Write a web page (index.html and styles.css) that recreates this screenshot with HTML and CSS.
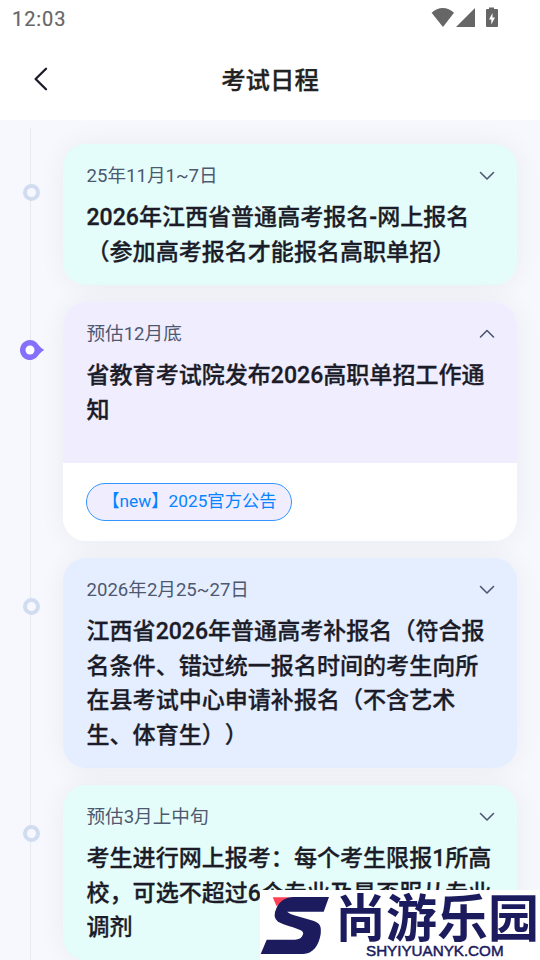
FILE: index.html
```html
<!DOCTYPE html>
<html lang="zh-CN">
<head>
<meta charset="utf-8">
<meta name="viewport" content="width=device-width, initial-scale=1">
<title>考试日程</title>
<link rel="stylesheet" href="styles.css">
</head>
<body>
<div class="screen">
  <div class="status">
    <span class="clock">12:03</span>
    <svg class="status-icons" width="68" height="20" viewBox="0 0 68 20">
      <path d="M0.6 4.8C7 -1.6 16.6 -1.6 23 4.8L12 19Z"/>
      <path d="M25 19L44 0V19Z"/>
      <path fill-rule="evenodd" d="M58 -0.5H63V1H66Q67 1 67 2V18Q67 19 66 19H56Q55 19 55 18V2Q55 1 56 1H58ZM61.5 5L58 11.5H60.3V16.5L64 9.5H61.5Z"/>
    </svg>
  </div>
  <header class="nav">
    <svg class="back" width="16" height="24" viewBox="0 0 16 24"><path d="M13 1.8L2.6 12L13 22.2"/></svg>
    <h1>考试日程</h1>
  </header>
  <main class="timeline">
    <section class="item">
      <div class="rail"><i class="dot"></i></div>
      <article class="card mint">
        <div class="head">
          <div class="meta"><span>25年11月1~7日</span><svg class="chev" width="16" height="10" viewBox="0 0 16 10"><path d="M1.5 1.5L8 8L14.5 1.5"/></svg></div>
          <h2>2026年江西省普通高考报名-网上报名<br>（参加高考报名才能报名高职单招）</h2>
        </div>
      </article>
    </section>
    <section class="item">
      <div class="rail"><svg class="pin" width="26" height="22" viewBox="0 0 26 22"><path d="M11 1A10 10 0 1 0 17.5 18.6C20 15.5 22 12.8 25.2 11C22 9.2 20 6.5 17.5 3.4A10 10 0 0 0 11 1Z"/><circle cx="11" cy="11" r="4.5"/></svg></div>
      <article class="card open">
        <div class="head lilac">
          <div class="meta"><span>预估12月底</span><svg class="chev" width="16" height="10" viewBox="0 0 16 10"><path d="M1.5 8L8 1.5L14.5 8"/></svg></div>
          <h2>省教育考试院发布2026高职单招工作通<br>知</h2>
        </div>
        <div class="links"><a class="pill">【new】2025官方公告</a></div>
      </article>
    </section>
    <section class="item">
      <div class="rail"><i class="dot"></i></div>
      <article class="card blue">
        <div class="head">
          <div class="meta"><span>2026年2月25~27日</span><svg class="chev" width="16" height="10" viewBox="0 0 16 10"><path d="M1.5 1.5L8 8L14.5 1.5"/></svg></div>
          <h2>江西省2026年普通高考补报名（符合报<br>名条件、错过统一报名时间的考生向所<br>在县考试中心申请补报名（不含艺术<br>生、体育生））</h2>
        </div>
      </article>
    </section>
    <section class="item">
      <div class="rail"><i class="dot"></i></div>
      <article class="card mint">
        <div class="head">
          <div class="meta"><span>预估3月上中旬</span><svg class="chev" width="16" height="10" viewBox="0 0 16 10"><path d="M1.5 1.5L8 8L14.5 1.5"/></svg></div>
          <h2>考生进行网上报考：每个考生限报1所高<br>校，可选不超过6个专业及是否服从专业<br>调剂</h2>
        </div>
      </article>
    </section>
  </main>
  <aside class="brand">
    <svg class="mark" width="70" height="64" viewBox="0 0 70 64">
      <path class="red" d="M12.7 3.3H30L16.5 12Z"/>
      <path class="navy" d="M69 3H33C25 3 19 8 16.5 14Q12 23 18 27.7C25 31.5 34 33 40 36Q44 37.5 43 40.5Q41 45.7 35 45.7H6.7L0.7 60H43C53 60 59 51 60.7 40C61.5 32 60 29.5 54 27L35 21.5Q29.5 20 27 17.7H63.7Z"/>
    </svg>
    <div class="brand-text">
      <div class="brand-name">尚游乐园</div>
      <div class="brand-url">SHYIYUANYK.COM</div>
    </div>
  </aside>
</div>
</body>
</html>
```
FILE: styles.css
```css
* { box-sizing: border-box; }
body {
  margin: 0;
  font-family: Roboto, "Noto Sans CJK SC", sans-serif;
  text-spacing-trim: space-all;
}
.screen {
  position: relative;
  width: 540px;
  height: 960px;
  overflow: hidden;
  background: #f7f8fd;
}
.status {
  display: flex;
  justify-content: space-between;
  height: 38px;
  padding: 8px 42px 0 12px;
  background: #fff;
}
.clock {
  font-size: 20px;
  line-height: 22px;
  font-weight: 400;
  letter-spacing: 0.9px;
  color: #666;
  -webkit-text-stroke: 0.2px #666;
}
.status-icons { fill: #666; margin-right: -1px; overflow: visible; }
.nav {
  display: grid;
  grid-template-columns: 60px 1fr 60px;
  align-items: center;
  height: 82px;
  background: #fff;
}
.back {
  margin-left: 33px;
  fill: none;
  stroke: #1a1b28;
  stroke-width: 2.3;
  stroke-linecap: round;
  stroke-linejoin: round;
}
h1 {
  margin: 0;
  padding-bottom: 1px;
  font-size: 24.4px;
  font-weight: 500;
  text-align: center;
  color: #222;
  -webkit-text-stroke: 0.3px #222;
}
.timeline {
  display: flex;
  flex-direction: column;
  gap: 17.1px;
  height: 840px;
  padding: 24px 23px 0 0;
  background: linear-gradient(#e7e9ef, #e7e9ef) 30px 8px / 1px 100% no-repeat;
}
.item { display: flex; flex: none; }
.rail { width: 63.4px; flex: none; padding: 39.5px 0 0 23px; }
.dot {
  display: block;
  width: 17px;
  height: 17px;
  border: 4px solid #d1dcf0;
  border-radius: 50%;
  background: #f7f8fd;
}
.pin { display: block; margin: -2.4px 0 0 -4.4px; fill: #866ffa; }
.pin circle { fill: #fff; }
.card {
  flex: 1;
  border-radius: 23px;
  overflow: hidden;
  box-shadow: 0 0 28px rgba(40, 45, 60, 0.055);
}
.mint { background: #e5fdfa; }
.blue { background: #e5eeff; }
.open { background: #fff; }
.lilac { background: #f0edff; }
.head { padding: 18.4px 22px 14.6px 23.1px; }
.open .head { height: 160.8px; }
.meta {
  display: flex;
  justify-content: space-between;
  align-items: center;
  height: 27px;
  margin-bottom: 11.7px;
  font-size: 18.6px;
  color: #4e5870;
}
.meta span { padding-bottom: 4.5px; }
.chev {
  margin-right: -0.4px;
  fill: none;
  stroke: #4b5672;
  stroke-width: 1.6;
  stroke-linecap: round;
  stroke-linejoin: round;
}
h2 {
  margin: 0;
  font-size: 23.05px;
  line-height: 34.56px;
  font-weight: 500;
  color: #1b1c28;
  white-space: nowrap;
  -webkit-text-stroke: 0.3px #1b1c28;
}
.links { padding: 20px 23px 19.8px; background: #fff; }
.pill {
  display: flex;
  align-items: center;
  justify-content: center;
  width: 206px;
  height: 38.5px;
  padding-bottom: 5px;
  border: 1px solid #3395ff;
  border-radius: 20px;
  background: #f0edff;
  font-size: 17.3px;
  color: #0784ff;
  white-space: nowrap;
}
.brand {
  position: absolute;
  left: 260px;
  top: 890px;
  display: flex;
  width: 280px;
  height: 70px;
  background: #fff;
}
.mark { flex: none; margin-top: 4px; }
.navy { fill: #1b1b5e; }
.red { fill: #ff4057; }
.brand-text { width: 210px; color: #1b1b5e; }
.brand-name {
  height: 53px;
  padding-left: 5px;
  font-family: "Noto Sans CJK SC", sans-serif;
  font-size: 51px;
  line-height: 50px;
  font-weight: 700;
  white-space: nowrap;
}
.brand-url {
  padding-left: 36px;
  font-family: "Liberation Sans", sans-serif;
  font-size: 15.2px;
  line-height: 16px;
  font-weight: 400;
  -webkit-text-stroke: 0.5px #1b1b5e;
}
```
